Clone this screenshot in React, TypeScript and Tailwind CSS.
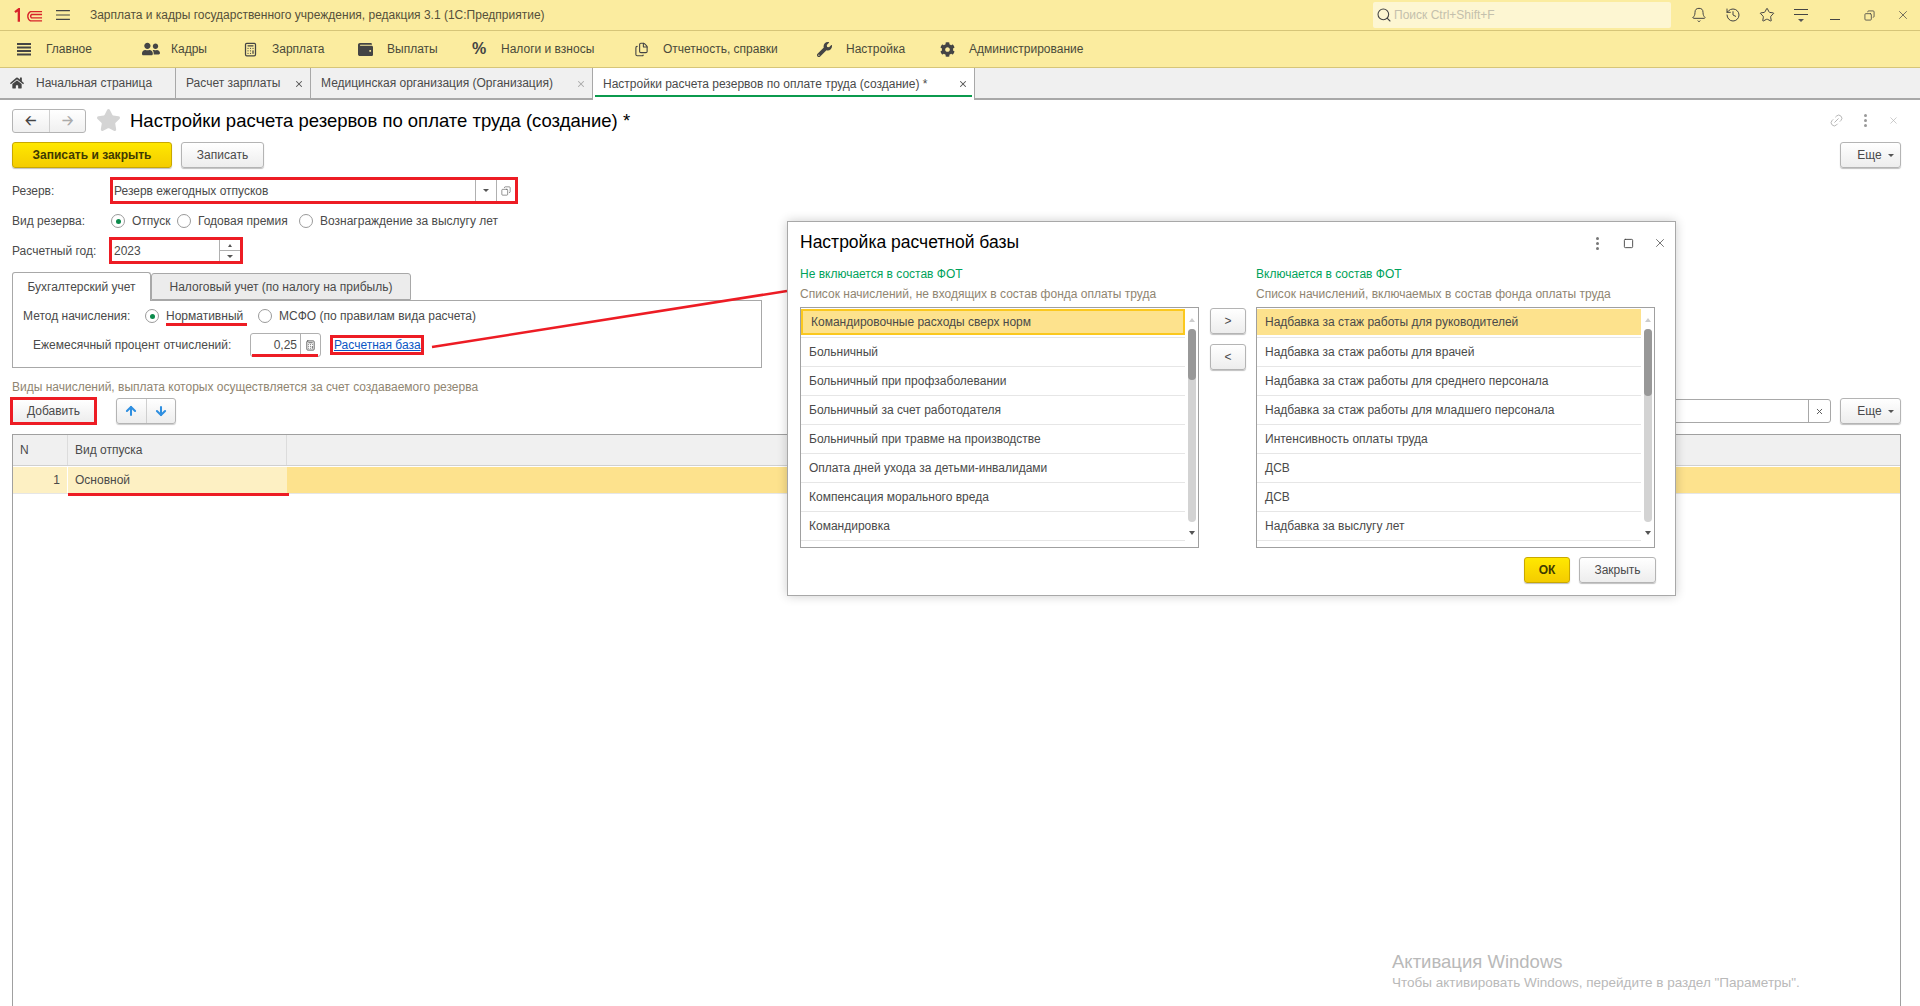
import { Bell, History, Star, X, Copy, Link2, Calculator, Files, Search, Square, ArrowUp, ArrowDown } from 'lucide-react'
import { FaHome, FaUserFriends, FaWrench, FaCog, FaWallet } from 'react-icons/fa'
import type { ReactNode } from 'react'

const TEXT = 'text-[#4a4a4a]'

const menuItems: { label: string; icon: ReactNode; w: string }[] = [
  { label: 'Главное', w: 'w-[125px]', icon: <Burger className="w-[14px] h-[14px] text-[#444]" heavy /> },
  { label: 'Кадры', w: 'w-[101px]', icon: <FaUserFriends className="w-[18px] h-[18px] text-[#444]" /> },
  { label: 'Зарплата', w: 'w-[115px]', icon: <Calculator className="w-[15px] h-[15px] text-[#444]" strokeWidth={2} /> },
  { label: 'Выплаты', w: 'w-[114px]', icon: <FaWallet className="w-[15px] h-[15px] text-[#444]" /> },
  { label: 'Налоги и взносы', w: 'w-[162px]', icon: <span className="font-bold text-[16px] text-[#444]">%</span> },
  { label: 'Отчетность, справки', w: 'w-[183px]', icon: <Files className="w-[15px] h-[15px] text-[#444]" strokeWidth={1.75} /> },
  { label: 'Настройка', w: 'w-[123px]', icon: <FaWrench className="w-[15px] h-[15px] text-[#444]" /> },
  { label: 'Администрирование', w: 'w-[180px]', icon: <FaCog className="w-[15px] h-[15px] text-[#444]" /> },
]

const leftList = [
  'Командировочные расходы сверх норм',
  'Больничный',
  'Больничный при профзаболевании',
  'Больничный за счет работодателя',
  'Больничный при травме на производстве',
  'Оплата дней ухода за детьми-инвалидами',
  'Компенсация морального вреда',
  'Командировка',
]

const rightList = [
  'Надбавка за стаж работы для руководителей',
  'Надбавка за стаж работы для врачей',
  'Надбавка за стаж работы для среднего персонала',
  'Надбавка за стаж работы для младшего персонала',
  'Интенсивность оплаты труда',
  'ДСВ',
  'ДСВ',
  'Надбавка за выслугу лет',
]

function Burger({ className, heavy }: { className?: string; heavy?: boolean }) {
  return (
    <svg viewBox="0 0 14 14" className={className} fill="none" stroke="currentColor" strokeWidth={heavy ? 2 : 1.2}>
      {heavy ? (
        <path d="M0 2h14M0 5.5h14M0 9h14M0 12.5h14" />
      ) : (
        <path d="M0 2.5h14M0 7h14M0 11.5h14" />
      )}
    </svg>
  )
}

function Logo() {
  return (
    <svg viewBox="0 0 30 15" className="w-[29px] h-[15px]" fill="none" stroke="#d8232a">
      <path d="M1 4l4-3v13" strokeWidth="2.4" />
      <path d="M29 3.5H17a5.5 5.5 0 0 0 0 9.5h12" strokeWidth="1.4" />
      <path d="M29 6.5H18a2.6 2.6 0 0 0 0 3.5h11" strokeWidth="1.4" />
    </svg>
  )
}

function Radio({ on }: { on?: boolean }) {
  return (
    <span className="w-[14px] h-[14px] rounded-full border border-[#9a9a9a] bg-white flex items-center justify-center shrink-0">
      {on && <span className="w-[5px] h-[5px] rounded-full bg-[#0b8a4b]" />}
    </span>
  )
}

function Caret({ className }: { className?: string }) {
  return <span className={`w-0 h-0 border-l-[3px] border-r-[3px] border-t-[3px] border-l-transparent border-r-transparent border-t-[#555] ${className ?? ''}`} />
}

function Btn({ children, className, yellow }: { children: ReactNode; className?: string; yellow?: boolean }) {
  return (
    <div
      className={`flex items-center justify-center rounded-[3px] border shadow-[0_1px_1px_rgba(0,0,0,0.25)] ${
        yellow
          ? 'bg-gradient-to-b from-[#ffe800] to-[#f4cc00] border-[#c9a800] text-[#3f3a00] font-bold'
          : 'bg-gradient-to-b from-white to-[#ededed] border-[#b4b4b4] text-[#4a4a4a]'
      } ${className ?? ''}`}
    >
      {children}
    </div>
  )
}

function Tab({ label, w, close, closeColor }: { label: string; w: string; close?: boolean; closeColor?: string }) {
  return (
    <div className={`relative flex items-center pl-[10px] border-r border-[#a8a8a8] ${w} ${TEXT}`}>
      <span className="whitespace-nowrap">{label}</span>
      {close && <X className={`absolute right-[6px] top-[11px] w-[10px] h-[10px] ${closeColor}`} strokeWidth={2.5} />}
    </div>
  )
}

function PickList({ title, hint, items, focus, thumbEnd }: { title: string; hint: string; items: string[]; focus?: boolean; thumbEnd: string }) {
  return (
    <div className="w-[399px] flex flex-col shrink-0">
      <div className="h-[16px] leading-[16px] text-[#00a25a] whitespace-nowrap mt-[44px]">{title}</div>
      <div className="h-[16px] leading-[16px] text-[#8f8571] whitespace-nowrap mt-[4px]">{hint}</div>
      <div className="h-[241px] mt-[5px] border border-[#a0a0a0] relative overflow-hidden pt-[1px]">
        {items.map((item, i) => (
          <div key={i} className={`h-[29px] w-[384px] border-b border-[#e6e6e6] ${i === 0 ? 'pb-[2px]' : ''}`}>
            <div
              className={`h-full flex items-center pl-[8px] whitespace-nowrap text-[#4a4a4a] ${
                i === 0 ? `bg-[#fde28d] ${focus ? 'border-2 border-[#fbc81e] pl-[6px]' : ''}` : ''
              }`}
            >
              {item}
            </div>
          </div>
        ))}
        <div className="absolute right-[2px] top-0 bottom-0 w-[9px] flex flex-col items-center">
          <span className="mt-[10px] w-0 h-0 border-l-[3px] border-r-[3px] border-b-[4px] border-l-transparent border-r-transparent border-b-[#ccc]" />
          <div className="mt-[7px] w-[8px] h-[193px] rounded-[4px] bg-[#d3d3d3]">
            <div className={`${thumbEnd} rounded-[4px] bg-[#989898]`} />
          </div>
          <Caret className="mt-[9px] !border-t-[4px]" />
        </div>
      </div>
    </div>
  )
}

export default function App() {
  return (
    <div className={`relative w-[1920px] h-[1006px] overflow-hidden bg-white text-[12px] ${TEXT} font-['Liberation_Sans',Arial,sans-serif]`}>
      {/* Title bar */}
      <div className="h-[31px] bg-[#fbec9f] border-b border-[#d6c578] flex items-center">
        <div className="ml-[14px]"><Logo /></div>
        <Burger className="ml-[13px] w-[14px] h-[14px] text-[#444]" />
        <span className="ml-[20px] w-[1292px] whitespace-nowrap text-[#55503a]">Зарплата и кадры государственного учреждения, редакция 3.1  (1С:Предприятие)</span>
        <div className="w-[300px] h-[26px] bg-[#fdf6d2] rounded-[2px] flex items-center pl-[3px] gap-[2px]">
          <Search className="w-[16px] h-[16px] text-[#444]" strokeWidth={1.6} />
          <span className="text-[#c4c0ac]">Поиск Ctrl+Shift+F</span>
        </div>
        <div className="ml-[11px] flex items-center text-[#444]">
          <div className="w-[34px] flex justify-center"><Bell className="w-[16px] h-[16px]" strokeWidth={1.5} /></div>
          <div className="w-[34px] flex justify-center"><History className="w-[16px] h-[16px]" strokeWidth={1.5} /></div>
          <div className="w-[34px] flex justify-center"><Star className="w-[16px] h-[16px]" strokeWidth={1.5} /></div>
          <div className="w-[34px] flex flex-col items-center gap-[4px]">
            <span className="w-[14px] h-px bg-[#444]" />
            <span className="w-[14px] h-px bg-[#444]" />
            <Caret />
          </div>
          <div className="w-[34px] flex justify-center pt-[9px]"><span className="w-[10px] h-px bg-[#444]" /></div>
          <div className="w-[34px] flex justify-center"><Copy className="w-[11px] h-[11px] -scale-x-100" strokeWidth={1.75} /></div>
          <div className="w-[34px] flex justify-center"><X className="w-[14px] h-[14px]" strokeWidth={1.25} /></div>
        </div>
      </div>

      {/* Section menu */}
      <div className="h-[37px] bg-[#fbec9f] border-b border-[#d6c578] flex items-center pl-[17px]">
        {menuItems.map((m) => (
          <div key={m.label} className={`flex items-center ${m.w}`}>
            <div className="w-[29px] flex justify-start">{m.icon}</div>
            <span className="whitespace-nowrap text-[#4a4a3a]">{m.label}</span>
          </div>
        ))}
      </div>

      {/* Open windows */}
      <div className="h-[32px] bg-[#f0f0f0] border-b-2 border-[#a8a8a8] flex">
        <div className={`flex items-center w-[176px] pl-[10px] gap-[12px] border-r border-[#a8a8a8] ${TEXT}`}>
          <FaHome className="w-[14px] h-[14px] text-[#444]" />
          <span className="whitespace-nowrap">Начальная страница</span>
        </div>
        <Tab label="Расчет зарплаты" w="w-[135px]" close closeColor="text-[#555]" />
        <Tab label="Медицинская организация (Организация)" w="w-[282px]" close closeColor="text-[#aaa]" />
        <div className="relative flex items-center w-[382px] h-[32px] bg-white pl-[10px] border-r border-[#a8a8a8] text-[#4a4a4a]">
          <span className="whitespace-nowrap">Настройки расчета резервов по оплате труда (создание) *</span>
          <X className="absolute right-[6px] top-[11px] w-[10px] h-[10px] text-[#555]" strokeWidth={2.5} />
          <span className="absolute left-[2px] right-[2px] top-[27px] h-[2px] bg-[#0b9a4d]" />
        </div>
      </div>

      {/* Form */}
      <div className="pl-[12px] pr-[19px] flex flex-col">
        <div className="mt-[8px] h-[25px] flex items-center">
          <div className="w-[74px] h-[24px] flex rounded-[3px] border border-[#b4b4b4] bg-gradient-to-b from-white to-[#f0f0f0]">
            <div className="flex-1 border-r border-[#cfcfcf] flex items-center justify-center text-[#444] text-[14px] font-bold">🡠</div>
            <div className="flex-1 flex items-center justify-center text-[#aaa] text-[14px] font-bold">🡢</div>
          </div>
          <Star className="ml-[10px] w-[25px] h-[25px] text-[#d4d4d4] fill-[#d4d4d4]" />
          <h1 className="ml-[9px] text-[18.5px] text-black whitespace-nowrap">Настройки расчета резервов по оплате труда (создание) *</h1>
          <div className="ml-auto flex items-center text-[#b5b5b5]">
            <Link2 className="w-[15px] h-[15px] -rotate-45" strokeWidth={1.5} />
            <div className="ml-[20px] flex flex-col gap-[2px]">
              <span className="w-[3px] h-[3px] rounded-full bg-[#999]" />
              <span className="w-[3px] h-[3px] rounded-full bg-[#999]" />
              <span className="w-[3px] h-[3px] rounded-full bg-[#999]" />
            </div>
            <X className="ml-[21px] mr-[2px] w-[11px] h-[11px]" strokeWidth={1.5} />
          </div>
        </div>

        <div className="mt-[9px] h-[26px] flex">
          <Btn yellow className="w-[160px]">Записать и закрыть</Btn>
          <Btn className="ml-[9px] w-[83px]">Записать</Btn>
          <Btn className="ml-auto w-[61px] gap-[6px] pl-[10px]">Еще <Caret /></Btn>
        </div>

        <div className="mt-[9px] h-[27px] flex items-center">
          <span className="w-[98px]">Резерв:</span>
          <div className="w-[408px] h-[27px] border-[3px] border-[#ed1c24] flex items-center bg-white">
            <span className="flex-1 pl-[1px] whitespace-nowrap">Резерв ежегодных отпусков</span>
            <div className="w-[21px] h-full border-l border-[#b0b0b0] flex items-center justify-center"><Caret /></div>
            <div className="w-[19px] h-full border-l border-[#b0b0b0] flex items-center justify-center">
              <Copy className="w-[10px] h-[10px] text-[#555] -scale-x-100" strokeWidth={1.5} />
            </div>
          </div>
        </div>

        <div className="mt-[4px] h-[26px] flex items-center">
          <span className="w-[99px]">Вид резерва:</span>
          <Radio on />
          <span className="ml-[7px] w-[45px]">Отпуск</span>
          <Radio />
          <span className="ml-[7px] w-[101px]">Годовая премия</span>
          <Radio />
          <span className="ml-[7px] whitespace-nowrap">Вознаграждение за выслугу лет</span>
        </div>

        <div className="mt-[3px] h-[27px] flex items-center">
          <span className="w-[97px] whitespace-nowrap">Расчетный год:</span>
          <div className="w-[134px] h-[27px] border-[3px] border-[#ed1c24] flex items-center bg-white">
            <span className="flex-1 pl-[2px]">2023</span>
            <div className="w-[21px] h-full border-l border-[#b0b0b0] flex flex-col">
              <div className="flex-1 border-b border-[#b0b0b0] flex items-center justify-center">
                <span className="w-0 h-0 border-l-[2px] border-r-[2px] border-b-[3px] border-l-transparent border-r-transparent border-b-[#555]" />
              </div>
              <div className="flex-1 flex items-center justify-center"><Caret /></div>
            </div>
          </div>
        </div>

        <div className="mt-[8px] h-[28px] flex relative z-10">
          <div className="w-[139px] h-[29px] flex items-center justify-center bg-white border border-b-0 border-[#a8a8a8] rounded-t-[3px]">Бухгалтерский учет</div>
          <div className="w-[260px] h-[27px] mt-[1px] flex items-center justify-center bg-[#ececec] border border-[#a8a8a8] rounded-t-[3px]">Налоговый учет (по налогу на прибыль)</div>
        </div>
        <div className="w-[750px] h-[68px] border border-[#a8a8a8] flex flex-col">
          <div className="mt-[4px] h-[22px] flex items-center pl-[10px]">
            <span className="w-[122px] whitespace-nowrap">Метод начисления:</span>
            <Radio on />
            <span className="ml-[7px] w-[92px] relative whitespace-nowrap">
              Нормативный
              <span className="absolute left-0 w-[81px] top-[16px] h-[3px] bg-[#ed1c24]" />
            </span>
            <Radio />
            <span className="ml-[7px] whitespace-nowrap">МСФО (по правилам вида расчета)</span>
          </div>
          <div className="mt-[6px] h-[24px] flex items-center pl-[20px]">
            <span className="w-[217px] whitespace-nowrap">Ежемесячный процент отчислений:</span>
            <div className="relative w-[71px] h-[24px] border border-[#b0b0b0] rounded-[3px] flex">
              <span className="flex-1 text-right pr-[3px] leading-[22px]">0,25</span>
              <div className="w-[20px] border-l border-[#b0b0b0] flex items-center justify-center">
                <Calculator className="w-[11px] h-[11px] text-[#555]" strokeWidth={2} />
              </div>
              <span className="absolute left-[1px] right-[2px] bottom-[-1px] h-[3px] bg-[#ed1c24]" />
            </div>
            <div className="ml-[9px] h-[20px] border-[3px] border-[#ed1c24] pl-[1px] pr-[0px] flex items-center">
              <span className="text-[#0a56c4] underline whitespace-nowrap">Расчетная база</span>
            </div>
          </div>
        </div>

        <div className="mt-[11px] h-[16px] leading-[16px] text-[#8f8571] whitespace-nowrap">Виды начислений, выплата которых осуществляется за счет создаваемого резерва</div>

        <div className="mt-[2px] h-[28px] flex items-center">
          <div className="-ml-[2px] w-[87px] h-[28px] border-[3px] border-[#ed1c24] flex items-center justify-center bg-gradient-to-b from-white to-[#ededed]">Добавить</div>
          <div className="ml-[19px] w-[60px] h-[26px] flex rounded-[3px] border border-[#b4b4b4] bg-gradient-to-b from-white to-[#ededed] shadow-[0_1px_1px_rgba(0,0,0,0.2)]">
            <div className="flex-1 border-r border-[#cfcfcf] flex items-center justify-center"><ArrowUp className="w-[14px] h-[14px] text-[#2f8fe0]" strokeWidth={3.5} /></div>
            <div className="flex-1 flex items-center justify-center"><ArrowDown className="w-[14px] h-[14px] text-[#2f8fe0]" strokeWidth={3.5} /></div>
          </div>
          <div className="ml-auto w-[400px] h-[24px] border border-[#a8a8a8] rounded-[3px] flex justify-end">
            <div className="w-[22px] h-full border-l border-[#a8a8a8] flex items-center justify-center"><X className="w-[9px] h-[9px] text-[#555]" strokeWidth={2.5} /></div>
          </div>
          <Btn className="ml-[9px] w-[61px] h-[26px] gap-[6px] pl-[10px]">Еще <Caret /></Btn>
        </div>

        <div className="mt-[9px] h-[572px] border border-b-0 border-[#a0a0a0] flex flex-col">
          <div className="h-[31px] bg-[#f0f0f0] flex border-b border-[#d0d0d0]">
            <div className="w-[55px] flex items-center pl-[7px] border-r border-[#dcdcdc]">N</div>
            <div className="w-[219px] flex items-center pl-[7px] border-r border-[#dcdcdc]">Вид отпуска</div>
          </div>
          <div className="mt-[1px] h-[27px] bg-[#fde28d] flex border-b border-[#e6e6e6]">
            <div className="w-[55px] bg-[#fdf0c3] flex items-center justify-end pr-[7px] border-r border-white">1</div>
            <div className="w-[219px] bg-[#fdf0c3] flex items-center pl-[7px]">Основной</div>
          </div>
        </div>
      </div>

      {/* Annotation marks */}
      <span className="absolute left-[68px] top-[493px] w-[221px] h-[3px] bg-[#ed1c24]" />
      <svg className="absolute left-0 top-0 pointer-events-none" width="800" height="360">
        <line x1="432" y1="347" x2="787" y2="291" stroke="#ed1c24" strokeWidth="2.5" />
      </svg>

      {/* Windows watermark */}
      <div className="absolute left-[1392px] top-[948px] text-[#b9b9b9] text-[18.5px] whitespace-nowrap">Активация Windows</div>
      <div className="absolute left-[1392px] top-[973px] text-[#b9b9b9] text-[13.5px] whitespace-nowrap">Чтобы активировать Windows, перейдите в раздел "Параметры".</div>

      {/* Dialog */}
      <div className="absolute left-[787px] top-[221px] w-[889px] h-[375px] bg-white border border-[#a8a8a8] shadow-[0_0_10px_rgba(0,0,0,0.2)] px-[12px]">
        <div className="absolute left-[12px] top-[10px] h-[21px] leading-[21px] text-[17.5px] text-black whitespace-nowrap">Настройка расчетной базы</div>
        <div className="absolute right-[8px] top-[14px] flex items-center text-[#444]">
          <div className="flex flex-col gap-[2px]">
            <span className="w-[3px] h-[3px] rounded-full bg-[#777]" />
            <span className="w-[3px] h-[3px] rounded-full bg-[#777]" />
            <span className="w-[3px] h-[3px] rounded-full bg-[#777]" />
          </div>
          <Square className="ml-[24px] w-[11px] h-[11px]" strokeWidth={2} />
          <X className="ml-[19px] w-[14px] h-[14px]" strokeWidth={1.25} />
        </div>
        <div className="flex">
          <PickList title="Не включается в состав ФОТ" hint="Список начислений, не входящих в состав фонда оплаты труда" items={leftList} focus thumbEnd="h-[51px]" />
          <div className="w-[57px] pl-[11px] pt-[86px] flex flex-col gap-[10px]">
            <Btn className="w-[36px] h-[26px]">&gt;</Btn>
            <Btn className="w-[36px] h-[26px]">&lt;</Btn>
          </div>
          <PickList title="Включается в состав ФОТ" hint="Список начислений, включаемых в состав фонда оплаты труда" items={rightList} thumbEnd="h-[67px]" />
        </div>
        <div className="mt-[9px] flex justify-end gap-[9px] pr-[7px]">
          <Btn yellow className="w-[46px] h-[26px]">ОК</Btn>
          <Btn className="w-[77px] h-[26px]">Закрыть</Btn>
        </div>
      </div>
    </div>
  )
}
